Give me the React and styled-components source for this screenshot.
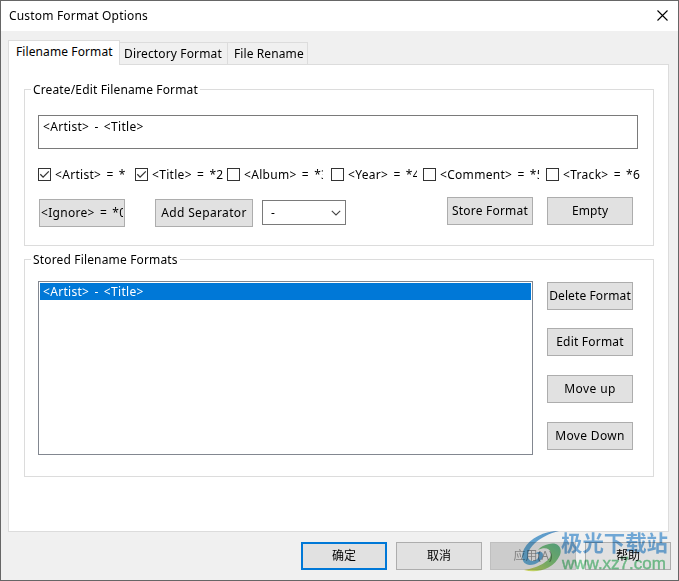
import React, { useState } from 'react';
import styled, { createGlobalStyle } from 'styled-components';

const FIELDS = [
  { id: 'artist', text: '<Artist> = *1', width: 97, clip: 72 },
  { id: 'title', text: '<Title> = *2', width: 92, clip: 71 },
  { id: 'album', text: '<Album> = *3', width: 104, clip: 79 },
  { id: 'year', text: '<Year> = *4', width: 92, clip: 69 },
  { id: 'comment', text: '<Comment> = *5', width: 123, clip: 99 },
  { id: 'track', text: '<Track> = *6', width: 97, clip: 80 },
];

const App = () => {
  const [checked, setChecked] = useState(['artist', 'title']);

  const toggle = (id) => {
    setChecked(
      checked.includes(id) ? checked.filter((c) => c !== id) : [...checked, id]
    );
  };

  return (
    <>
      <GlobalStyle />
      <StyledWindow>
        <StyledTitleBar>
          <StyledText $spacing={0.18}>Custom Format Options</StyledText>
          <StyledClose width="11" height="11" viewBox="0 0 11 11">
            <path d="M0.5 0.5L10.5 10.5M10.5 0.5L0.5 10.5" />
          </StyledClose>
        </StyledTitleBar>
        <StyledTabs>
          <StyledTab $active $width={112} $indent={7}>
            <StyledText $spacing={0.1}>Filename Format</StyledText>
          </StyledTab>
          <StyledTab $width={108} $indent={4}>
            <StyledText $spacing={0.14}>Directory Format</StyledText>
          </StyledTab>
          <StyledTab $width={80} $indent={6}>
            <StyledText $spacing={0.1}>File Rename</StyledText>
          </StyledTab>
        </StyledTabs>
        <StyledPanel>
          <StyledGroup $height={157}>
            <StyledLegend $width={169}>
              <StyledText $spacing={0.14}>Create/Edit Filename Format</StyledText>
            </StyledLegend>
            <StyledInput>
              <StyledToken>&lt;Artist&gt; - &lt;Title&gt;</StyledToken>
            </StyledInput>
            <StyledChecks>
              {FIELDS.map((f) => (
                <StyledCheck key={f.id} $width={f.width} onClick={() => toggle(f.id)}>
                  <StyledBox>
                    {checked.includes(f.id) && (
                      <svg width="11" height="11" viewBox="0 0 11 11">
                        <path d="M1.3 5.3L4.1 8.1L9.8 2.4" />
                      </svg>
                    )}
                  </StyledBox>
                  <StyledCheckText $width={f.clip}>
                    <StyledToken>{f.text}</StyledToken>
                  </StyledCheckText>
                </StyledCheck>
              ))}
            </StyledChecks>
            <StyledActions>
              <StyledButton $top={2} $clip>
                <StyledToken>&lt;Ignore&gt; = *0</StyledToken>
              </StyledButton>
              <StyledButton $top={2} $left={30} $width={98}>
                <StyledText $spacing={0.35}>Add Separator</StyledText>
              </StyledButton>
              <StyledSelect>
                <StyledText>-</StyledText>
                <svg width="10" height="6" viewBox="0 0 10 6">
                  <path d="M0.8 0.8L5 5L9.2 0.8" />
                </svg>
              </StyledSelect>
              <StyledButton $left={101}>
                <StyledText $spacing={0.2}>Store Format</StyledText>
              </StyledButton>
              <StyledButton $left={14}>
                <StyledText $spacing={0.1}>Empty</StyledText>
              </StyledButton>
            </StyledActions>
          </StyledGroup>
          <StyledGroup $height={218}>
            <StyledLegend $width={149}>
              <StyledText $spacing={0.16}>Stored Filename Formats</StyledText>
            </StyledLegend>
            <StyledStored>
              <StyledList>
                <StyledItem>
                  <StyledToken>&lt;Artist&gt; - &lt;Title&gt;</StyledToken>
                </StyledItem>
              </StyledList>
              <StyledSide>
                <StyledButton>
                  <StyledText $spacing={0.1}>Delete Format</StyledText>
                </StyledButton>
                <StyledButton $top={18}>
                  <StyledText $spacing={0.2}>Edit Format</StyledText>
                </StyledButton>
                <StyledButton $top={19}>
                  <StyledText $spacing={0.4}>Move up</StyledText>
                </StyledButton>
                <StyledButton $top={19}>
                  <StyledText $spacing={0.35}>Move Down</StyledText>
                </StyledButton>
              </StyledSide>
            </StyledStored>
          </StyledGroup>
        </StyledPanel>
        <StyledFooter>
          <StyledButton $primary>
            <StyledText>确定</StyledText>
          </StyledButton>
          <StyledButton $left={9}>
            <StyledText>取消</StyledText>
          </StyledButton>
          <StyledButton $left={8} disabled>
            <StyledText>应用(A)</StyledText>
          </StyledButton>
          <StyledButton $left={9}>
            <StyledText>帮助</StyledText>
          </StyledButton>
        </StyledFooter>
        <StyledWatermark>
          <Swirl />
          <StyledBrand>
            <StyledBrandName>极光下载站</StyledBrandName>
            <StyledBrandUrl>www.xz7.com</StyledBrandUrl>
          </StyledBrand>
        </StyledWatermark>
      </StyledWindow>
    </>
  );
};

const Swirl = () => (
  <svg width="40" height="42" viewBox="0 0 40 42">
    <defs>
      <linearGradient id="wave" x1="0" y1="1" x2="1" y2="0">
        <stop offset="0" stopColor="#4aaade" />
        <stop offset="1" stopColor="#3a86c8" />
      </linearGradient>
      <linearGradient id="leaf" x1="0" y1="1" x2="1" y2="0">
        <stop offset="0" stopColor="#dcd93a" />
        <stop offset="0.5" stopColor="#6fc75e" />
        <stop offset="1" stopColor="#3fb37c" />
      </linearGradient>
    </defs>
    <path
      d="M37 0C22 0 8 7 2 18C-2 27 1 34 8 34C14 34 21 29 21 24C21 20 16 20 13 23C17 22 18 24 16 27C13 31 7 31 6 26C5 17 17 5 37 0Z"
      fill="url(#wave)"
    />
    <path
      d="M2 39C15 43 32 38 38 24C41 15 34 11 27 13C22 14 18 16 16 19C22 16 28 17 29 22C30 29 17 37 2 39Z"
      fill="url(#leaf)"
    />
  </svg>
);

export default App;

const GlobalStyle = createGlobalStyle`
  body {
    margin: 0;
    font-family: "Noto Sans", "Noto Sans CJK SC", sans-serif;
    font-size: 12px;
    color: #000;
  }

  * {
    box-sizing: border-box;
  }
`;

const StyledWindow = styled.div`
  position: relative;
  width: 679px;
  height: 581px;
  border: 1px solid #666;
  background-color: #f0f0f0;
  overflow: hidden;
`;

const StyledText = styled.span`
  line-height: 16px;
  white-space: pre;
  letter-spacing: ${(props) => props.$spacing || 0}px;
`;

const StyledToken = styled(StyledText)`
  letter-spacing: 0.3px;
  word-spacing: 1.8px;
`;

const StyledTitleBar = styled.div`
  display: flex;
  align-items: flex-start;
  justify-content: space-between;
  height: 30px;
  padding: 7px 10px 0 8px;
  background-color: #fff;
`;

const StyledClose = styled.svg`
  margin-top: 2px;
  stroke: #000;
  stroke-width: 1.1;
`;

const StyledTabs = styled.div`
  display: flex;
  align-items: flex-end;
  height: 33px;
  padding: 0 7px;
`;

const StyledTab = styled.div`
  display: flex;
  align-items: center;
  width: ${(props) => props.$width}px;
  height: ${(props) => (props.$active ? 25 : 22)}px;
  margin-bottom: ${(props) => (props.$active ? -1 : 0)}px;
  padding: 0 0 ${(props) => (props.$active ? 3 : 0)}px ${(props) => props.$indent}px;
  border: 1px solid #dcdcdc;
  border-bottom: 0;
  border-left-width: ${(props) => (props.$active ? 1 : 0)}px;
  background-color: ${(props) => (props.$active ? '#fff' : '#f0f0f0')};
  z-index: ${(props) => (props.$active ? 1 : 0)};
`;

const StyledPanel = styled.div`
  width: 661px;
  height: 468px;
  margin-left: 7px;
  padding: 24px 14px 0 15px;
  border: 1px solid #dcdcdc;
  background-color: #fff;
`;

const StyledGroup = styled.div`
  height: ${(props) => props.$height}px;
  margin-bottom: 13px;
  border: 1px solid #dcdcdc;
`;

const StyledLegend = styled.div`
  display: flex;
  width: ${(props) => props.$width}px;
  height: 16px;
  margin: -8px 0 0 6px;
  padding-left: 2px;
  background-color: #fff;
`;

const StyledInput = styled.div`
  display: flex;
  align-items: flex-start;
  width: 600px;
  height: 34px;
  margin: 17px 0 0 13px;
  padding: 3px 4px;
  border: 1px solid #7a7a7a;
`;

const StyledChecks = styled.div`
  display: flex;
  height: 13px;
  margin: 19px 0 0 13px;
`;

const StyledCheck = styled.div`
  display: flex;
  align-items: center;
  flex: none;
  width: ${(props) => props.$width}px;
`;

const StyledBox = styled.span`
  display: flex;
  flex: none;
  width: 13px;
  height: 13px;
  border: 1px solid #333;

  path {
    fill: none;
    stroke: #333;
    stroke-width: 1.3;
  }
`;

const StyledCheckText = styled.span`
  display: flex;
  width: ${(props) => props.$width}px;
  margin-left: 4px;
  overflow: hidden;
`;

const StyledActions = styled.div`
  display: flex;
  align-items: flex-start;
  margin: 16px 0 0 14px;
`;

const StyledButton = styled.button`
  display: flex;
  flex: none;
  align-items: center;
  justify-content: ${(props) => (props.$clip ? 'flex-start' : 'center')};
  width: ${(props) => props.$width || 86}px;
  height: 28px;
  margin: ${(props) => props.$top || 0}px 0 0 ${(props) => props.$left || 0}px;
  padding: 0 1px;
  border: ${(props) => (props.$primary ? '2px solid #0078d7' : '1px solid #adadad')};
  background-color: #e1e1e1;
  color: #000;
  font: inherit;

  ${StyledToken} {
    width: 83px;
    overflow: hidden;
    text-align: left;
  }

  &:disabled {
    border-color: #bfbfbf;
    background-color: #ccc;
    color: #838383;
  }
`;

const StyledSelect = styled.div`
  display: flex;
  align-items: center;
  justify-content: space-between;
  width: 84px;
  height: 25px;
  margin: 3px 0 0 9px;
  padding: 0 4px 0 8px;
  border: 1px solid #7a7a7a;

  path {
    fill: none;
    stroke: #444;
    stroke-width: 1.1;
  }
`;

const StyledStored = styled.div`
  display: flex;
  margin: 13px 0 0 13px;
`;

const StyledList = styled.div`
  width: 495px;
  height: 174px;
  padding: 1px;
  border: 1px solid #828790;
`;

const StyledItem = styled.div`
  display: flex;
  align-items: center;
  height: 17px;
  padding-left: 3px;
  background-color: #0078d7;
  color: #fff;
`;

const StyledSide = styled.div`
  margin: 1px 0 0 14px;
`;

const StyledFooter = styled.div`
  display: flex;
  justify-content: flex-end;
  margin-top: 10px;
  padding-right: 7px;
`;

const StyledWatermark = styled.div`
  position: absolute;
  left: 521px;
  top: 530px;
  display: flex;
  opacity: 0.8;
  mix-blend-mode: multiply;
  pointer-events: none;
`;

const StyledBrand = styled.div`
  display: flex;
  flex-direction: column;
  margin: -1px 0 0 -1px;
  white-space: nowrap;
`;

const StyledBrandName = styled.span`
  font-size: 21.4px;
  font-weight: 700;
  line-height: 25px;
  color: #559fdc;
`;

const StyledBrandUrl = styled.span`
  padding-left: 1px;
  font-family: "Liberation Sans", sans-serif;
  font-size: 17px;
  line-height: 18px;
  color: #5cc47e;
  -webkit-text-stroke: 0.4px #5cc47e;
`;
